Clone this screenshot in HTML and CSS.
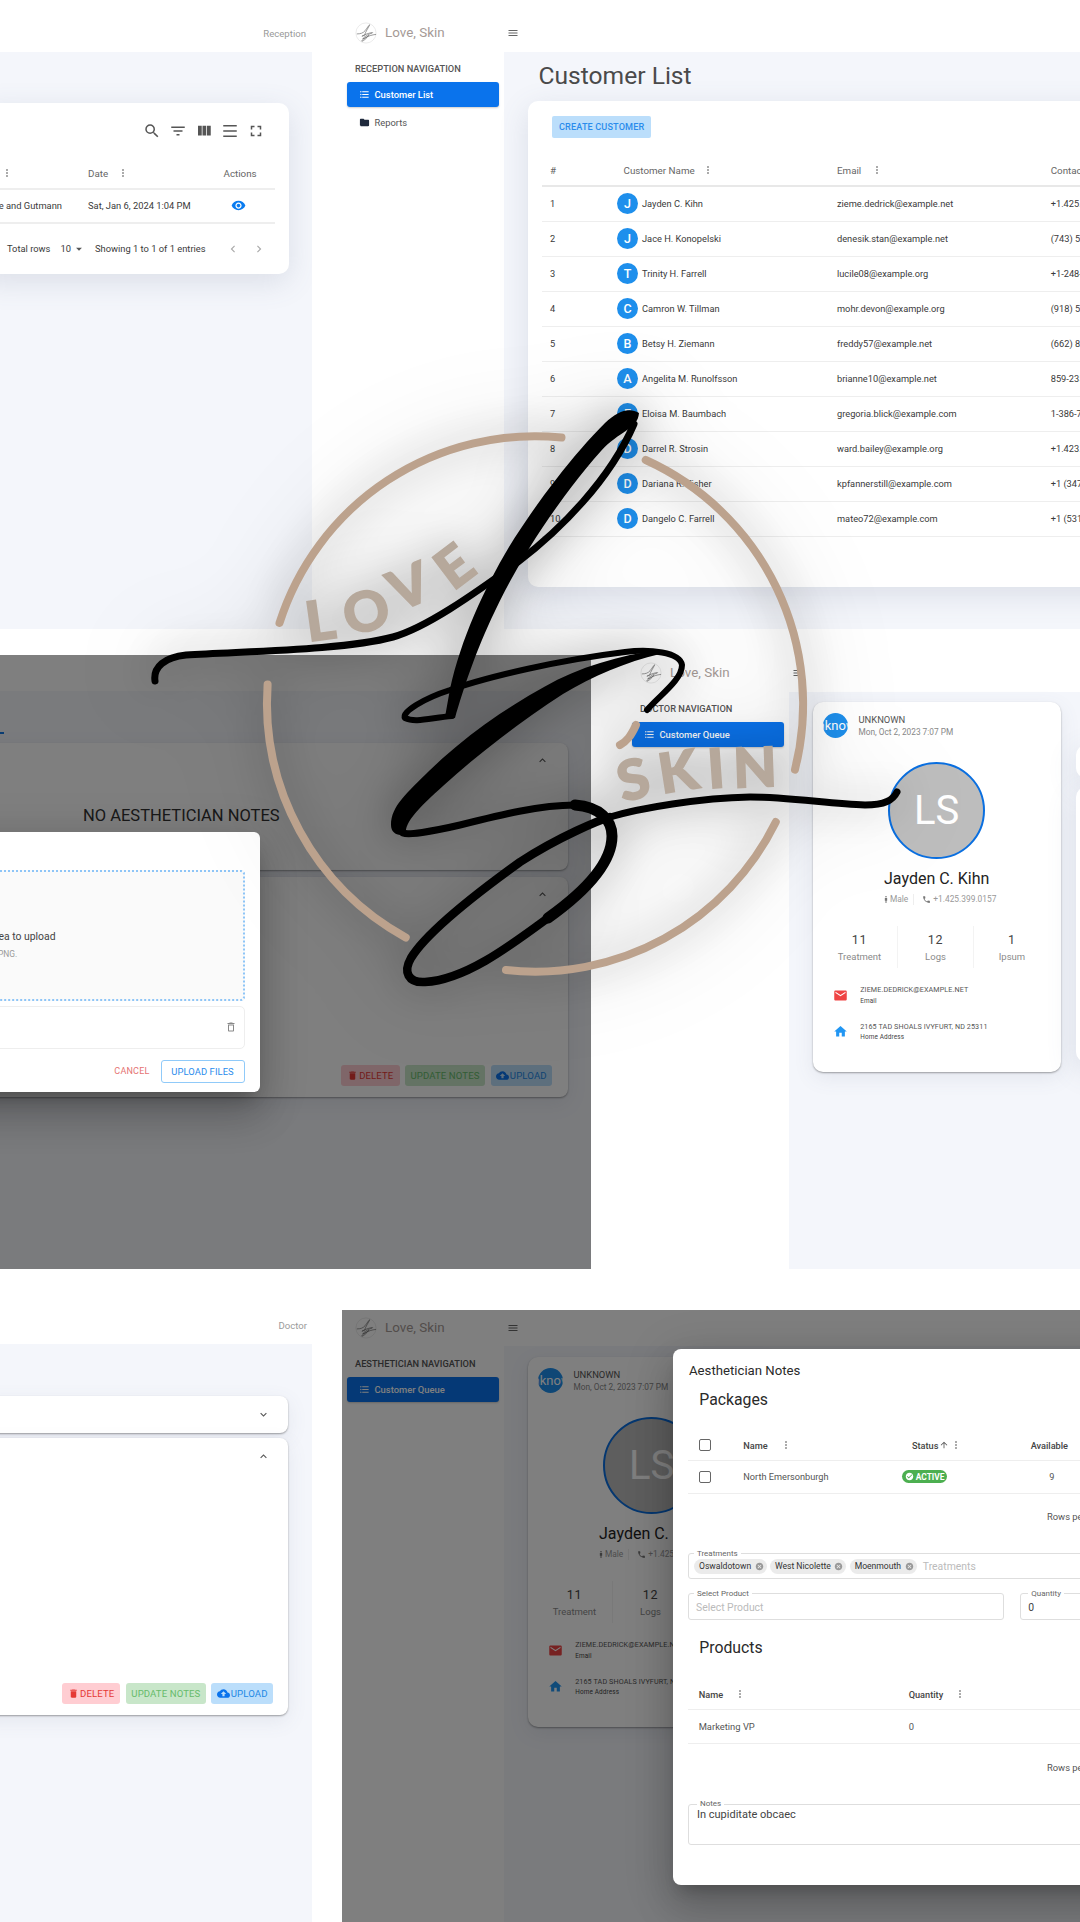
FILE: index.html
```html
<!DOCTYPE html>
<html lang="en">
<head>
<meta charset="utf-8">
<title>Love, Skin</title>
<link rel="stylesheet" href="styles.css">
</head>
<body>
<svg class="sprite" aria-hidden="true">
  <symbol id="i-search" viewBox="0 0 24 24"><path d="M15.5 14h-.79l-.28-.27A6.471 6.471 0 0 0 16 9.5 6.5 6.5 0 1 0 9.5 16c1.61 0 3.09-.59 4.23-1.57l.27.28v.79l5 4.99L20.49 19l-4.99-5zm-6 0C7.01 14 5 11.99 5 9.5S7.01 5 9.5 5 14 7.01 14 9.5 11.99 14 9.5 14z"/></symbol>
  <symbol id="i-filter" viewBox="0 0 24 24"><path d="M10 18h4v-2h-4v2zM3 6v2h18V6H3zm3 7h12v-2H6v2z"/></symbol>
  <symbol id="i-cols" viewBox="0 0 24 24"><path d="M10 18h5V5h-5v13zm-6 0h5V5H4v13zM16 5v13h5V5h-5z"/></symbol>
  <symbol id="i-density" viewBox="0 0 24 24"><path d="M3 4h18v2H3zM3 11h18v2H3zM3 18h18v2H3z"/></symbol>
  <symbol id="i-full" viewBox="0 0 24 24"><path d="M7 14H5v5h5v-2H7v-3zm-2-4h2V7h3V5H5v5zm12 7h-3v2h5v-5h-2v3zM14 5v2h3v3h2V5h-5z"/></symbol>
  <symbol id="i-eye" viewBox="0 0 24 24"><path d="M12 4.5C7 4.5 2.73 7.61 1 12c1.73 4.39 6 7.5 11 7.5s9.27-3.11 11-7.5c-1.73-4.39-6-7.5-11-7.5zM12 17c-2.76 0-5-2.24-5-5s2.24-5 5-5 5 2.24 5 5-2.24 5-5 5zm0-8c-1.66 0-3 1.34-3 3s1.34 3 3 3 3-1.34 3-3-1.34-3-3-3z"/></symbol>
  <symbol id="i-left" viewBox="0 0 24 24"><path d="M15.41 7.41 14 6l-6 6 6 6 1.41-1.41L10.83 12z"/></symbol>
  <symbol id="i-right" viewBox="0 0 24 24"><path d="M10 6 8.59 7.41 13.17 12l-4.58 4.59L10 18l6-6z"/></symbol>
  <symbol id="i-caret" viewBox="0 0 24 24"><path d="M7 10l5 5 5-5z"/></symbol>
  <symbol id="i-kebab" viewBox="0 0 24 24"><path d="M12 8c1.1 0 2-.9 2-2s-.9-2-2-2-2 .9-2 2 .9 2 2 2zm0 2c-1.1 0-2 .9-2 2s.9 2 2 2 2-.9 2-2-.9-2-2-2zm0 6c-1.1 0-2 .9-2 2s.9 2 2 2 2-.9 2-2-.9-2-2-2z"/></symbol>
  <symbol id="i-list" viewBox="0 0 24 24"><path d="M4 10.5c-.83 0-1.5.67-1.5 1.5s.67 1.5 1.5 1.5 1.5-.67 1.5-1.5-.67-1.5-1.5-1.5zm0-6c-.83 0-1.5.67-1.5 1.5S3.17 7.5 4 7.5 5.5 6.83 5.5 6 4.83 4.5 4 4.5zm0 12c-.83 0-1.5.68-1.5 1.5s.68 1.5 1.5 1.5 1.5-.68 1.5-1.5-.67-1.5-1.5-1.5zM7 19h14v-2H7v2zm0-6h14v-2H7v2zm0-8v2h14V5H7z"/></symbol>
  <symbol id="i-folder" viewBox="0 0 24 24"><path d="M10 4H4c-1.1 0-1.99.9-1.99 2L2 18c0 1.1.9 2 2 2h16c1.1 0 2-.9 2-2V8c0-1.1-.9-2-2-2h-8l-2-2z"/></symbol>
  <symbol id="i-up" viewBox="0 0 24 24"><path d="M12 8l-6 6 1.41 1.41L12 10.83l4.59 4.58L18 14z"/></symbol>
  <symbol id="i-down" viewBox="0 0 24 24"><path d="M16.59 8.59 12 13.17 7.41 8.59 6 10l6 6 6-6z"/></symbol>
  <symbol id="i-delete" viewBox="0 0 24 24"><path d="M6 19c0 1.1.9 2 2 2h8c1.1 0 2-.9 2-2V7H6v12zM19 4h-3.5l-1-1h-5l-1 1H5v2h14V4z"/></symbol>
  <symbol id="i-delete-o" viewBox="0 0 24 24"><path d="M6 19c0 1.1.9 2 2 2h8c1.1 0 2-.9 2-2V7H6v12zM8 9h8v10H8V9zm7.5-5l-1-1h-5l-1 1H5v2h14V4z"/></symbol>
  <symbol id="i-cloud" viewBox="0 0 24 24"><path d="M19.35 10.04C18.67 6.59 15.64 4 12 4 9.11 4 6.6 5.64 5.35 8.04 2.34 8.36 0 10.91 0 14c0 3.31 2.69 6 6 6h13c2.76 0 5-2.24 5-5 0-2.64-2.05-4.78-4.65-4.96zM14 13v4h-4v-4H7l5-5 5 5h-3z"/></symbol>
  <symbol id="i-mail" viewBox="0 0 24 24"><path d="M20 4H4c-1.1 0-2 .9-2 2v12c0 1.1.9 2 2 2h16c1.1 0 2-.9 2-2V6c0-1.1-.9-2-2-2zm0 4l-8 5-8-5V6l8 5 8-5v2z"/></symbol>
  <symbol id="i-home" viewBox="0 0 24 24"><path d="M10 20v-6h4v6h5v-8h3L12 3 2 12h3v8z"/></symbol>
  <symbol id="i-phone" viewBox="0 0 24 24"><path d="M6.62 10.79c1.44 2.83 3.76 5.14 6.59 6.59l2.2-2.2c.27-.27.67-.36 1.02-.24 1.12.37 2.33.57 3.57.57.55 0 1 .45 1 1V20c0 .55-.45 1-1 1-9.39 0-17-7.61-17-17 0-.55.45-1 1-1h3.5c.55 0 1 .45 1 1 0 1.25.2 2.45.57 3.57.11.35.03.74-.25 1.02l-2.2 2.2z"/></symbol>
  <symbol id="i-male" viewBox="0 0 24 24"><path d="M12 1.5a2.4 2.4 0 1 1 0 4.8 2.4 2.4 0 0 1 0-4.8zM8.5 7.5h7v8h-2v7h-3v-7h-2z"/></symbol>
  <symbol id="i-cancel" viewBox="0 0 24 24"><path d="M12 2C6.47 2 2 6.47 2 12s4.47 10 10 10 10-4.47 10-10S17.53 2 12 2zm5 13.59L15.59 17 12 13.41 8.41 17 7 15.59 10.59 12 7 8.41 8.41 7 12 10.59 15.59 7 17 8.41 13.41 12 17 15.59z"/></symbol>
  <symbol id="i-check" viewBox="0 0 24 24"><path d="M12 2C6.48 2 2 6.48 2 12s4.48 10 10 10 10-4.48 10-10S17.52 2 12 2zm-2 15l-5-5 1.41-1.41L10 14.17l7.59-7.59L19 8l-9 9z"/></symbol>
  <symbol id="i-arrow" viewBox="0 0 24 24"><path d="M4 12l1.41 1.41L11 7.83V20h2V7.83l5.58 5.59L20 12l-8-8-8 8z"/></symbol>
  <symbol id="i-menu" viewBox="0 0 24 24"><path d="M3 18h18v-2H3v2zm0-5h18v-2H3v2zm0-7v2h18V6H3z"/></symbol>
  <symbol id="i-mark" viewBox="0 0 24 24">
    <circle class="mark-ring" cx="12" cy="12" r="11"/>
    <path class="mark-line" d="M2 13C6 13 9 12 11 9.5 13 7 15 3.5 16 3 15 6 11 11 10.5 14.5L7.5 15.5C11 13.5 15 12 19 11.5 20 12 17 12.5 15 13.5 12 15 9 17 8.5 18.5 11 18 14 16 15 14.5 13 17.5 9 21 7.5 21 7 19 14 14.5 23 13.5"/>
  </symbol>
</svg>

<main class="canvas">

  <section class="window win-a">
    <header class="topbar topbar-end"><span class="role">Reception</span></header>
    <div class="main">
      <div class="card log-card">
        <div class="tool-row">
          <svg class="ic tool"><use href="#i-search"/></svg>
          <svg class="ic tool"><use href="#i-filter"/></svg>
          <svg class="ic tool"><use href="#i-cols"/></svg>
          <svg class="ic tool"><use href="#i-density"/></svg>
          <svg class="ic tool"><use href="#i-full"/></svg>
        </div>
        <div class="log-grid log-head">
          <span class="log-kebab"><svg class="ic kebab"><use href="#i-kebab"/></svg></span>
          <span class="head-cell">Date <svg class="ic kebab log-date-kebab"><use href="#i-kebab"/></svg></span>
          <span class="head-cell">Actions</span>
        </div>
        <div class="log-grid log-row">
          <span class="log-company">Rohde and Gutmann</span>
          <span>Sat, Jan 6, 2024 1:04 PM</span>
          <span class="log-eye"><svg class="ic eye"><use href="#i-eye"/></svg></span>
        </div>
        <div class="log-pager">
          <span>Total rows</span>
          <span class="pager-count">10</span>
          <svg class="ic pager-caret"><use href="#i-caret"/></svg>
          <span class="pager-show">Showing 1 to 1 of 1 entries</span>
          <svg class="ic pager-chev pager-prev"><use href="#i-left"/></svg>
          <svg class="ic pager-chev pager-next"><use href="#i-right"/></svg>
        </div>
      </div>
    </div>
  </section>

  <section class="window win-b">
    <header class="topbar">
      <div class="brand"><svg class="brand-mark"><use href="#i-mark"/></svg><span class="brand-name">Love, Skin</span></div>
      <svg class="ic burger"><use href="#i-menu"/></svg>
    </header>
    <div class="body">
      <nav class="sidebar">
        <h4 class="nav-title">RECEPTION NAVIGATION</h4>
        <a class="nav-item active"><svg class="ic nav-ic"><use href="#i-list"/></svg>Customer List</a>
        <a class="nav-item"><svg class="ic nav-ic"><use href="#i-folder"/></svg>Reports</a>
      </nav>
      <div class="main main-pad">
        <h1 class="page-title">Customer List</h1>
        <div class="card list-card">
          <button class="btn-create">CREATE CUSTOMER</button>
          <div class="cust-table">
            <div class="cust-row cust-head">
              <span>#</span>
              <span class="name-head">Customer Name<svg class="ic kebab k-name"><use href="#i-kebab"/></svg></span>
              <span>Email<svg class="ic kebab k-mail"><use href="#i-kebab"/></svg></span>
              <span>Contact</span>
            </div>
            <div class="cust-row"><span>1</span><span class="cust-name"><i class="av">J</i>Jayden C. Kihn</span><span>zieme.dedrick@example.net</span><span>+1.425.399.0157</span></div>
            <div class="cust-row"><span>2</span><span class="cust-name"><i class="av">J</i>Jace H. Konopelski</span><span>denesik.stan@example.net</span><span>(743) 555-0142</span></div>
            <div class="cust-row"><span>3</span><span class="cust-name"><i class="av">T</i>Trinity H. Farrell</span><span>lucile08@example.org</span><span>+1-248-555-0171</span></div>
            <div class="cust-row"><span>4</span><span class="cust-name"><i class="av">C</i>Camron W. Tillman</span><span>mohr.devon@example.org</span><span>(918) 555-0119</span></div>
            <div class="cust-row"><span>5</span><span class="cust-name"><i class="av">B</i>Betsy H. Ziemann</span><span>freddy57@example.net</span><span>(662) 855-0130</span></div>
            <div class="cust-row"><span>6</span><span class="cust-name"><i class="av">A</i>Angelita M. Runolfsson</span><span>brianne10@example.net</span><span>859-235-0108</span></div>
            <div class="cust-row"><span>7</span><span class="cust-name"><i class="av">E</i>Eloisa M. Baumbach</span><span>gregoria.blick@example.com</span><span>1-386-755-0164</span></div>
            <div class="cust-row"><span>8</span><span class="cust-name"><i class="av">D</i>Darrel R. Strosin</span><span>ward.bailey@example.org</span><span>+1.423.555.0126</span></div>
            <div class="cust-row"><span>9</span><span class="cust-name"><i class="av">D</i>Dariana R. Fisher</span><span>kpfannerstill@example.com</span><span>+1 (347) 555-0155</span></div>
            <div class="cust-row"><span>10</span><span class="cust-name"><i class="av">D</i>Dangelo C. Farrell</span><span>mateo72@example.com</span><span>+1 (531) 555-0188</span></div>
          </div>
        </div>
      </div>
    </div>
  </section>

  <section class="window win-c">
    <header class="topbar topbar-short"></header>
    <div class="main main-notes">
      <span class="tab-mark"></span>
      <div class="card acc acc-empty">
        <svg class="ic acc-chev"><use href="#i-up"/></svg>
        <p class="no-notes">NO AESTHETICIAN NOTES</p>
      </div>
      <div class="card acc acc-body-short">
        <svg class="ic acc-chev"><use href="#i-up"/></svg>
        <div class="acc-actions">
          <span class="soft soft-red"><svg class="ic soft-ic"><use href="#i-delete"/></svg>DELETE</span>
          <span class="soft soft-green">UPDATE NOTES</span>
          <span class="soft soft-blue"><svg class="ic soft-ic cloud"><use href="#i-cloud"/></svg>UPLOAD</span>
        </div>
      </div>
    </div>
    <div class="scrim"></div>
    <div class="upload-modal">
      <div class="drop-zone">
        <p class="drop-main">Drop your files here or click this area to upload</p>
        <p class="drop-sub">Accepted formats are JPG or PNG.</p>
      </div>
      <div class="file-row"><svg class="ic trash"><use href="#i-delete-o"/></svg></div>
      <div class="upload-actions">
        <span class="btn-cancel">CANCEL</span>
        <span class="btn-outline">UPLOAD FILES</span>
      </div>
    </div>
  </section>

  <section class="window win-d">
    <header class="topbar">
      <div class="brand"><svg class="brand-mark"><use href="#i-mark"/></svg><span class="brand-name">Love, Skin</span></div>
      <svg class="ic burger"><use href="#i-menu"/></svg>
    </header>
    <div class="body">
      <nav class="sidebar">
        <h4 class="nav-title">DOCTOR NAVIGATION</h4>
        <a class="nav-item active"><svg class="ic nav-ic"><use href="#i-list"/></svg>Customer Queue</a>
      </nav>
      <div class="main profile-main">
        <article class="card profile">
          <div class="p-head"><span class="p-avatar"><span>Unknown</span></span><div><div class="p-role">UNKNOWN</div><div class="p-date">Mon, Oct 2, 2023 7:07 PM</div></div></div>
          <div class="ls">LS</div>
          <h3 class="p-name">Jayden C. Kihn</h3>
          <div class="p-meta"><span class="meta-a"><svg class="ic meta-ic"><use href="#i-male"/></svg>Male</span><span class="meta-b"><svg class="ic meta-ic phone"><use href="#i-phone"/></svg>+1.425.399.0157</span></div>
          <div class="stats"><div class="stat"><b>11</b><span>Treatment</span></div><div class="stat"><b>12</b><span>Logs</span></div><div class="stat"><b>1</b><span>Ipsum</span></div></div>
          <div class="contact"><svg class="ic c-ic c-mail"><use href="#i-mail"/></svg><div><div class="c-val">ZIEME.DEDRICK@EXAMPLE.NET</div><div class="c-lab">Email</div></div></div>
          <div class="contact c-next"><svg class="ic c-ic c-home"><use href="#i-home"/></svg><div><div class="c-val">2165 TAD SHOALS IVYFURT, ND 25311</div><div class="c-lab">Home Address</div></div></div>
        </article>
        <div class="side-cards">
          <div class="card stub stub-a"></div>
          <div class="card stub stub-b"></div>
        </div>
      </div>
    </div>
  </section>

  <section class="window win-e">
    <header class="topbar topbar-end topbar-tall"><span class="role">Doctor</span></header>
    <div class="main main-notes main-notes-plain">
      <div class="card acc acc-closed"><svg class="ic acc-chev"><use href="#i-down"/></svg></div>
      <div class="card acc acc-body-tall">
        <svg class="ic acc-chev"><use href="#i-up"/></svg>
        <div class="acc-actions">
          <span class="soft soft-red"><svg class="ic soft-ic"><use href="#i-delete"/></svg>DELETE</span>
          <span class="soft soft-green">UPDATE NOTES</span>
          <span class="soft soft-blue"><svg class="ic soft-ic cloud"><use href="#i-cloud"/></svg>UPLOAD</span>
        </div>
      </div>
    </div>
  </section>

  <section class="window win-f">
    <div class="win-f-inner">
      <header class="topbar topbar-dim">
        <div class="brand"><svg class="brand-mark"><use href="#i-mark"/></svg><span class="brand-name">Love, Skin</span></div>
        <svg class="ic burger"><use href="#i-menu"/></svg>
      </header>
      <div class="body">
        <nav class="sidebar sidebar-dim">
          <h4 class="nav-title">AESTHETICIAN NAVIGATION</h4>
          <a class="nav-item active"><svg class="ic nav-ic"><use href="#i-list"/></svg>Customer Queue</a>
        </nav>
        <div class="main profile-main profile-main-dim">
          <article class="card profile">
            <div class="p-head"><span class="p-avatar"><span>Unknown</span></span><div><div class="p-role">UNKNOWN</div><div class="p-date">Mon, Oct 2, 2023 7:07 PM</div></div></div>
            <div class="ls">LS</div>
            <h3 class="p-name">Jayden C. Kihn</h3>
            <div class="p-meta"><span class="meta-a"><svg class="ic meta-ic"><use href="#i-male"/></svg>Male</span><span class="meta-b"><svg class="ic meta-ic phone"><use href="#i-phone"/></svg>+1.425.399.0157</span></div>
            <div class="stats"><div class="stat"><b>11</b><span>Treatment</span></div><div class="stat"><b>12</b><span>Logs</span></div><div class="stat"><b>1</b><span>Ipsum</span></div></div>
            <div class="contact"><svg class="ic c-ic c-mail"><use href="#i-mail"/></svg><div><div class="c-val">ZIEME.DEDRICK@EXAMPLE.NET</div><div class="c-lab">Email</div></div></div>
            <div class="contact c-next"><svg class="ic c-ic c-home"><use href="#i-home"/></svg><div><div class="c-val">2165 TAD SHOALS IVYFURT, ND 25311</div><div class="c-lab">Home Address</div></div></div>
          </article>
        </div>
      </div>
    </div>
    <div class="scrim"></div>
    <div class="notes-modal">
      <h2 class="nm-title">Aesthetician Notes</h2>
      <h3 class="nm-section">Packages</h3>
      <div class="pk-row pk-head">
        <span class="box"></span>
        <span class="th">Name<svg class="ic kebab k-pk"><use href="#i-kebab"/></svg></span>
        <span class="th th-status">Status<svg class="ic sort"><use href="#i-arrow"/></svg><svg class="ic kebab"><use href="#i-kebab"/></svg></span>
        <span class="th">Available</span>
      </div>
      <div class="pk-row pk-data">
        <span class="box"></span>
        <span>North Emersonburgh</span>
        <span class="pill"><svg class="ic pill-ic"><use href="#i-check"/></svg>ACTIVE</span>
        <span class="pk-num">9</span>
      </div>
      <div class="rows-per">Rows per page</div>
      <fieldset class="field f-treat">
        <legend>Treatments</legend>
        <span class="chip">Oswaldotown<svg class="ic chip-x"><use href="#i-cancel"/></svg></span>
        <span class="chip">West Nicolette<svg class="ic chip-x"><use href="#i-cancel"/></svg></span>
        <span class="chip">Moenmouth<svg class="ic chip-x"><use href="#i-cancel"/></svg></span>
        <span class="ph ph-treat">Treatments</span>
      </fieldset>
      <div class="field-pair">
        <fieldset class="field f-prod"><legend>Select Product</legend><span class="ph ph-prod">Select Product</span></fieldset>
        <fieldset class="field f-qty"><legend>Quantity</legend><span class="val">0</span></fieldset>
      </div>
      <h3 class="nm-section nm-products">Products</h3>
      <div class="pr-row pr-head">
        <span class="th">Name<svg class="ic kebab k-pr-a"><use href="#i-kebab"/></svg></span>
        <span class="th">Quantity<svg class="ic kebab k-pr-b"><use href="#i-kebab"/></svg></span>
      </div>
      <div class="pr-row pr-data"><span>Marketing VP</span><span>0</span></div>
      <div class="rows-per rows-per-b">Rows per page</div>
      <fieldset class="field f-notes"><legend>Notes</legend><span class="val">In cupiditate obcaec</span></fieldset>
    </div>
  </section>

  <svg class="logo" viewBox="0 0 1080 1922" role="img" aria-label="Love, Skin logo">
    <g class="ring">
      <path d="M279.5 623A268 268 0 0 1 561.5 437.5"/>
      <path d="M645.7 460A268 268 0 0 1 795 769.6"/>
      <path d="M775.8 822A268 268 0 0 1 506 970"/>
      <path d="M405.7 937.5A268 268 0 0 1 267.6 684.6"/>
      <path d="M636 725C631 736 627 741 620 745"/>
    </g>
    <g class="letters">
      <text transform="translate(320 620) rotate(-8) scale(1.03 1)" y="20">L</text>
      <text transform="translate(366 611) rotate(-15) scale(1.03 1)" y="20">O</text>
      <text transform="translate(409 586) rotate(-22) scale(1.03 1)" y="20">V</text>
      <text transform="translate(454 566) rotate(-37) scale(1.03 1)" y="20">E</text>
      <text transform="translate(633 779) rotate(-14) scale(1.03 1)" y="20">S</text>
      <text transform="translate(678 771) rotate(-9) scale(1.03 1)" y="20">K</text>
      <text transform="translate(716 768) rotate(-4) scale(1.03 1)" y="20">I</text>
      <text transform="translate(755 767) rotate(-2) scale(1.03 1)" y="20">N</text>
    </g>
    <g class="sig-fill">
      <path d="M639 413C629 407 618 411 605 423 574 454 539 499 509 547 484 589 461 639 450 689L445 717 455 718C463 690 476 650 495 611 521 556 561 496 601 451 619 431 638 429 639 413Z"/>
      <path d="M660 650C620 655 579 667 544 687 504 709 464 737 429 771 407 793 391 806 391 825 391 833 398 837 406 834 404 822 421 806 443 786 478 754 523 720 563 694 593 676 626 662 660 654Z"/>
    </g>
    <g class="sig-line">
      <path class="w6" d="M155 681C153 667 165 657 186 655 250 651 345 650 393 637 425 628 470 597 518 562 560 530 610 480 634 424"/>
      <path class="w5" d="M452 716C430 718 415 723 405 718 401 712 425 698 450 690 490 676 560 660 625 652 650 649 680 652 682 665 682 680 660 695 647 710"/>
      <path class="w6" d="M403 833C408 835 430 832 460 825 500 815 540 805 575 805"/>
      <path class="w10" d="M575 805C600 807 612 820 612 836 612 860 590 888 548 918"/>
      <path class="w7" d="M548 918C510 946 465 980 425 982 408 983 403 972 411 958 425 935 470 898 520 862 560 836 600 820 610 817"/>
      <path class="w6" d="M610 817C640 808 700 798 750 797 790 797 830 804 865 805 885 805 893 800 897 792"/>
    </g>
  </svg>
</main>
</body>
</html>
```
FILE: styles.css
```css
* { box-sizing: border-box; }
html, body { margin: 0; padding: 0; }
body { width: 1080px; height: 1922px; overflow: hidden; background: #fff; font-family: Roboto, "Liberation Sans", sans-serif; color: #3a3a3a; font-size: 9.8px; }
h1, h2, h3, h4, p { margin: 0; font-weight: 400; }
.sprite { position: absolute; width: 0; height: 0; }
.ic { display: block; width: 12px; height: 12px; fill: currentColor; flex: none; }
.canvas { position: relative; width: 1080px; height: 1922px; overflow: hidden; }

/* windows on the free canvas */
.window { position: absolute; overflow: hidden; background: #fff; display: flex; flex-direction: column; }
.win-a { left: 0; top: 0; width: 312px; height: 629px; }
.win-b { left: 312px; top: 0; width: 768px; height: 629px; }
.win-c { left: 0; top: 655px; width: 591px; height: 614px; }
.win-d { left: 597px; top: 640px; width: 483px; height: 629px; }
.win-e { left: 0; top: 1269px; width: 312px; height: 653px; }
.win-f { left: 342px; top: 1310px; width: 738px; height: 612px; }
.win-f-inner { margin-left: -30px; width: 768px; height: 612px; display: flex; flex-direction: column; }

.topbar { flex: none; height: 52px; padding-top: 14px; display: flex; align-items: center; background: #fff; }
.topbar-end { justify-content: flex-end; padding: 14px 6px 0 0; }
.topbar-short { height: 36px; padding: 0; }
.topbar-tall { height: 75px; padding: 0 5px 12px 0; align-items: flex-end; }
.topbar-dim { height: 36px; padding: 0; }
.role { font-size: 9.6px; color: #9a9a9a; line-height: 13px; }
.brand { width: 192px; padding-left: 43px; display: flex; align-items: center; gap: 8px; }
.brand-mark { width: 22px; height: 22px; flex: none; }
.mark-ring { fill: #fff; stroke: #e9e9e9; stroke-width: 1; }
.mark-line { fill: none; stroke: #666; stroke-width: .7; }
.brand-name { font-size: 13.4px; color: #a59a96; line-height: 18px; }
.burger { margin-left: 3px; width: 12px; height: 12px; color: #666; }

.body { flex: 1; display: flex; min-height: 0; }
.sidebar { width: 192px; flex: none; background: #fff; padding: 10px 0 0 35px; }
.sidebar-dim { padding-top: 11px; }
.nav-title { margin-left: 8px; height: 14px; line-height: 14px; font-size: 9.25px; font-weight: 500; color: #555; }
.nav-item { margin-top: 6px; width: 152px; height: 25.3px; padding-left: 12px; border-radius: 3px; display: flex; align-items: center; gap: 4.5px; font-size: 9.4px; color: #555; }
.nav-item + .nav-item { margin-top: 2.2px; }
.nav-item.active { background: #0a73ec; color: #fff; font-weight: 500; box-shadow: 0 1px 2px rgba(0,0,0,.2); }
.nav-ic { width: 11px; height: 11px; }
.nav-item:not(.active) .nav-ic { color: #1f2a3d; }

.main { flex: 1; min-width: 0; background: #f4f6fb; }
.main-pad { padding: 10px 0 0 23.5px; }
.card { background: #fff; border-radius: 10px; box-shadow: 0 8px 30px rgba(90,100,130,.16); }

/* log table */
.win-a .main { padding-top: 51px; }
.log-card { margin-left: -20px; width: 308.6px; height: 171px; padding: 0 14px 0 20px; }
.tool-row { height: 56px; display: flex; justify-content: flex-end; align-items: center; gap: 8px; padding-right: 9.5px; }
.tool { width: 18px; height: 18px; color: #555; }
.log-grid { display: grid; grid-template-columns: 88px 135.5px 51px; align-items: center; margin-left: 0; }
.log-head { height: 30.5px; border-bottom: 2px solid #eee; color: #666; }
.head-cell { display: flex; align-items: center; }
.log-kebab { padding-left: 1px; }
.kebab { width: 12px; height: 12px; color: #999; }
.log-date-kebab { margin-left: 9px; }
.log-row { height: 34.2px; border-bottom: 2px solid #eee; font-size: 9.35px; }
.log-company { display: flex; justify-content: flex-end; white-space: nowrap; padding-right: 26px; }
.log-eye { padding-left: 7px; }
.eye { width: 15px; height: 15px; color: #0a7cf0; }
.log-pager { height: 50px; display: flex; align-items: center; padding-left: 7px; font-size: 9.35px; white-space: nowrap; }
.pager-count { margin-left: 10px; }
.pager-caret { width: 14px; height: 14px; margin-left: 1px; color: #555; }
.pager-show { margin-left: 9px; }
.pager-chev { width: 14px; height: 14px; color: #aaa; }
.pager-prev { margin-left: 20px; }
.pager-next { margin-left: 12px; }

/* customer table */
.page-title { height: 28px; line-height: 28px; font-size: 24.6px; color: #4a4a4a; margin-left: 11px; }
.list-card { margin-top: 10.7px; width: 800px; height: 486px; padding: 15px 0 0 14.5px; }
.btn-create { display: block; margin-left: 10px; width: 99.4px; height: 22px; padding: 0; border: 0; border-radius: 2px; background: #bbdefb; color: #2a8cec; font: 500 9.1px Roboto, sans-serif; letter-spacing: .15px; }
.cust-table { margin-top: 18.3px; }
.cust-row { display: grid; grid-template-columns: 75px 220px 213.7px 200px; height: 35px; align-items: center; border-bottom: 1.5px solid #eee; white-space: nowrap; font-size: 9.25px; }
.cust-row > span:first-child { padding-left: 8px; }
.cust-head { height: 31px; color: #666; border-bottom: 2px solid #e8e8e8; font-size: 9.8px; }
.cust-head > span { display: flex; align-items: center; }
.name-head { padding-left: 6.5px; }
.k-name { margin-left: 7px; }
.k-mail { margin-left: 10px; }
.cust-name { display: flex; align-items: center; gap: 4px; }
.av { width: 21px; height: 21px; border-radius: 50%; background: #1e8fec; color: #fff; font: 500 12.5px/21px Roboto, sans-serif; text-align: center; flex: none; }

/* notes panels */
.main-notes { padding-top: 41px; }
.main-notes-plain { padding-top: 52px; }
.tab-mark { display: block; width: 4px; height: 2px; background: #1479e6; margin-bottom: 9px; }
.acc { position: relative; margin-left: -20px; border-radius: 8px; box-shadow: 0 1px 2px rgba(0,0,0,.35), 0 6px 20px rgba(90,100,130,.1); }
.win-c .acc { width: 587.5px; }
.win-e .acc { width: 308.4px; }
.acc + .acc { margin-top: 5px; }
.acc-empty { height: 127px; padding: 63px 0 0 103px; }
.no-notes { font-size: 16.5px; line-height: 20px; color: #333; }
.acc-body-short { height: 220px; margin-top: 6.7px !important; }
.acc-closed { height: 36.7px; }
.acc-body-tall { height: 277px; }
.acc-chev { position: absolute; right: 18.5px; top: 12.5px; width: 13px; height: 13px; color: #555; }
.acc-closed .acc-chev { top: 12px; }
.win-c .acc-chev { top: 11px; }
.acc-actions { position: absolute; right: 15.5px; bottom: 10.4px; display: flex; gap: 5.5px; }
.soft { height: 21px; border-radius: 3px; display: flex; align-items: center; justify-content: center; gap: 1px; font-size: 9.6px; letter-spacing: .1px; }
.soft-red { width: 58.5px; background: #ffcdd2; color: #e53935; }
.soft-green { width: 80px; background: #c8e6c9; color: #66bb6a; }
.soft-blue { width: 61.5px; background: #bbdefb; color: #1e88e5; }
.soft-ic { width: 11px; height: 13px; }
.cloud { width: 13px; color: #0a73ec; }
.scrim { position: absolute; inset: 0; background: rgba(0,0,0,.5); }

/* upload dialog */
.upload-modal { position: absolute; left: -300px; top: 177px; width: 560px; height: 259.7px; background: #fff; border-radius: 6px; padding: 38px 15.5px 0 0; box-shadow: 0 11px 15px -7px rgba(0,0,0,.2), 0 24px 38px 3px rgba(0,0,0,.14), 0 9px 46px 8px rgba(0,0,0,.12); }
.drop-zone { height: 130.7px; border: 2px dotted #8ec5f7; border-radius: 4px; background: #fafafa; padding: 58px 187px 0 0; text-align: right; white-space: nowrap; }
.drop-main { font-size: 10.4px; line-height: 14px; color: #444; }
.drop-sub { font-size: 8.4px; line-height: 14px; margin: 3px 38.4px 0 0; color: #999; }
.file-row { height: 43px; margin-top: 5.3px; border: 1.5px solid #eee; border-radius: 5px; display: flex; justify-content: flex-end; align-items: center; padding-right: 7px; }
.trash { width: 12px; height: 12px; color: #888; }
.upload-actions { margin-top: 11px; display: flex; justify-content: flex-end; align-items: center; gap: 11px; }
.btn-cancel { font-size: 9px; color: #e57373; letter-spacing: .2px; }
.btn-outline { width: 84px; height: 23px; border: 1.5px solid #90caf9; border-radius: 3px; color: #2a8cec; font-size: 9.4px; letter-spacing: .1px; display: flex; align-items: center; justify-content: center; }

/* doctor profile */
.profile-main { padding: 10px 0 0 23.7px; display: flex; gap: 15px; align-items: flex-start; }
.profile-main-dim { padding-top: 11px; }
.profile { width: 248px; height: 369.7px; flex: none; padding-top: 11px; box-shadow: 0 1px 2px rgba(0,0,0,.35), 0 6px 20px rgba(90,100,130,.1); }
.p-head { display: flex; align-items: center; gap: 10px; padding-left: 10.8px; height: 25px; }
.p-avatar { width: 25px; height: 25px; border-radius: 50%; background: #1e8fec; color: #fff; overflow: hidden; display: flex; justify-content: center; align-items: center; font-size: 13px; flex: none; }
.p-avatar span { flex: none; }
.p-role { font-size: 9.4px; color: #555; line-height: 13px; }
.p-date { font-size: 8.3px; color: #888; line-height: 13px; }
.ls { margin: 24px auto 0; width: 97px; height: 97px; border-radius: 50%; border: 2px solid #0a6fe0; background: #bdbdbd; color: #fff; font-size: 40px; line-height: 93px; text-align: center; }
.p-name { margin-top: 10px; text-align: center; font-size: 16px; line-height: 20px; color: #222; }
.p-meta { margin: 4px 0 0 5px; height: 12px; display: flex; justify-content: center; align-items: center; font-size: 8.4px; color: #999; }
.meta-a, .meta-b { display: flex; align-items: center; }
.meta-a { padding-right: 5px; border-right: 1px solid #eee; }
.meta-b { padding-left: 8px; gap: 2px; }
.meta-ic { width: 8px; height: 11px; color: #777; }
.phone { width: 9px; height: 9px; }
.stats { margin: 21px 9.3px 0; display: grid; grid-template-columns: repeat(3, 76px); height: 42px; }
.stat { text-align: center; padding-top: 7px; border-right: 1px solid #f3f3f3; }
.stat:last-child { border-right: 0; }
.stat b { display: block; font-weight: 400; font-size: 12.5px; line-height: 14px; letter-spacing: .8px; color: #444; }
.stat span { display: block; margin-top: 4px; font-size: 9.5px; line-height: 12px; color: #8a8a8a; }
.contact { margin-top: 16.4px; padding-left: 20.5px; display: flex; align-items: center; gap: 12px; height: 22.6px; }
.c-next { margin-top: 13.7px; }
.c-ic { width: 15px; height: 15px; }
.c-mail { color: #ef4444; }
.c-home { color: #2196f3; }
.c-val { font-size: 7.2px; line-height: 11.3px; color: #555; letter-spacing: .1px; white-space: nowrap; }
.c-lab { font-size: 6.4px; line-height: 11.3px; color: #444; letter-spacing: .15px; }
.side-cards { flex: none; padding-top: 43px; display: flex; flex-direction: column; gap: 8.7px; }
.stub { width: 100px; }
.stub-a { height: 33px; }
.stub-b { height: 275px; }

/* notes dialog */
.notes-modal { position: absolute; left: 330.7px; top: 39px; width: 640px; height: 536px; background: #fff; border-radius: 8px; padding: 14px 0 0 15.3px; font-size: 9.4px; box-shadow: 0 11px 15px -7px rgba(0,0,0,.2), 0 24px 38px 3px rgba(0,0,0,.14), 0 9px 46px 8px rgba(0,0,0,.12); }
.nm-title { font-size: 13.2px; line-height: 16px; color: #2a2a2a; margin-left: 1px; }
.nm-section { margin: 10px 0 0 11.3px; font-size: 15.8px; line-height: 22px; color: #2a2a2a; }
.pk-row { display: grid; grid-template-columns: 55.3px 158.7px 128.7px 100px; align-items: center; border-bottom: 1.5px solid #eee; }
.pk-head { margin-top: 20px; height: 29.7px; }
.pk-data { height: 33.3px; color: #555; font-size: 9.2px; }
.box { display: block; width: 12px; height: 12px; border: 1.5px solid #666; border-radius: 2px; margin-left: 11.3px; }
.th { display: flex; align-items: center; font-weight: 500; color: #444; font-size: 9.2px; }
.k-pk { margin-left: 12px; }
.th-status { margin-left: 10px; gap: 1px; }
.sort { width: 10px; height: 10px; color: #555; }
.pill { width: 45.3px; height: 12.7px; border-radius: 7px; background: #4caf50; color: #fff; font-size: 8.4px; font-weight: 700; display: flex; align-items: center; justify-content: center; gap: 2px; }
.pill-ic { width: 9px; height: 9px; }
.pk-num { padding-left: 18.5px; }
.rows-per { margin: 17px 0 0 359px; line-height: 12px; color: #555; white-space: nowrap; }
.field { margin: 0; padding: 0 0 0 5px; border: 1.5px solid #dedede; border-radius: 3px; display: flex; align-items: center; min-width: 0; }
.field legend { font-size: 8px; line-height: 8px; color: #666; padding: 0 3px; margin-left: 0; }
.f-treat { margin-top: 27px; height: 29px; padding-bottom: 3px; gap: 3.3px; }
.chip { height: 15px; border-radius: 8px; background: #ebebeb; padding: 0 3px 0 5px; display: flex; align-items: center; gap: 3.5px; font-size: 8.6px; color: #333; white-space: nowrap; }
.chip-x { width: 9px; height: 9px; color: #999; }
.ph { font-size: 10.4px; color: #bbb; }
.ph-treat { margin-left: 3px; }
.ph-prod { margin-left: 2px; }
.field-pair { margin-top: 11px; display: flex; gap: 16px; }
.f-prod { width: 316.3px; height: 30px; padding-bottom: 2px; }
.f-qty { width: 120px; height: 30px; padding: 0 0 2px 7px; }
.val { font-size: 10.4px; color: #444; }
.nm-products { margin-top: 17.5px; }
.pr-row { display: grid; grid-template-columns: 210px 200px; align-items: center; padding-left: 10.7px; border-bottom: 1.5px solid #eee; }
.pr-head { margin-top: 20px; height: 31px; }
.pr-data { height: 34px; color: #555; }
.k-pr-a { margin-left: 11px; }
.k-pr-b { margin-left: 11px; }
.rows-per-b { margin-top: 17.4px; }
.f-notes { margin-top: 26.5px; height: 45px; width: 600px; align-items: flex-start; padding-left: 8px; }
.f-notes .val { font-size: 11px; line-height: 14px; }

/* logo overlay */
.logo { position: absolute; left: 0; top: 0; width: 1080px; height: 1922px; overflow: visible; filter: drop-shadow(0 0 20px rgba(0,0,0,.3)) drop-shadow(0 0 40px rgba(0,0,0,.28)); }
.ring path { fill: none; stroke: #bca28d; stroke-width: 8; stroke-linecap: round; }
.letters text { font-family: Lato, "Open Sans", sans-serif; font-weight: 900; font-size: 55px; fill: #b6a89b; stroke: #b6a89b; stroke-width: 1.5px; text-anchor: middle; }
.sig-fill path { fill: #000; }
.sig-line path { fill: none; stroke: #000; stroke-linecap: round; stroke-linejoin: round; }
.w5 { stroke-width: 6; }
.w6 { stroke-width: 7; }
.w7 { stroke-width: 8.5; }
.w10 { stroke-width: 11; }
```
